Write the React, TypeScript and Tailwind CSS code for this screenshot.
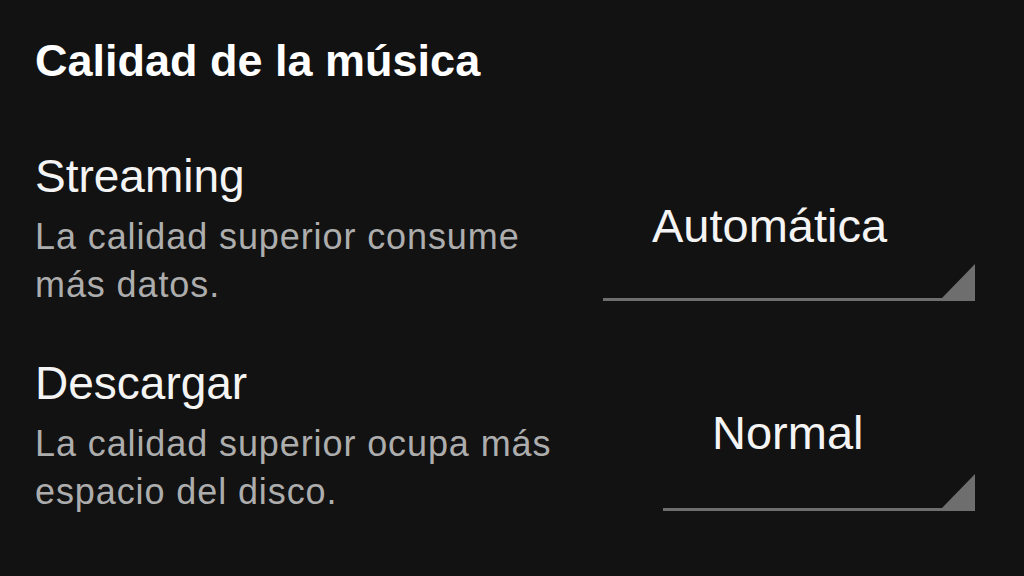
import type { ReactNode } from "react";

function Corner() {
  return (
    <svg width="33" height="34" viewBox="0 0 33 34" className="block">
      <polygon points="33,0 33,34 0,34" fill="#6e6e6e" />
    </svg>
  );
}

type SpinnerProps = {
  value: string;
  width: string;
  rowHeight: string;
};

function Spinner({ value, width, rowHeight }: SpinnerProps) {
  return (
    <div className={`flex flex-col ${width}`}>
      <div className="pl-[49px] text-[47px] leading-[56px] text-[#f4f4f4]">{value}</div>
      <div className={`flex items-end justify-end border-b-[3px] border-[#6e6e6e] ${rowHeight}`}>
        <Corner />
      </div>
    </div>
  );
}

function SettingRow({ title, children, spinner }: { title: string; children: ReactNode; spinner: ReactNode }) {
  return (
    <div className="flex items-start justify-between">
      <div className="flex flex-col">
        <div className="text-[46px] leading-[52px] text-[#f4f4f4]">{title}</div>
        <div className="mt-[11px] text-[36px] leading-[48px] tracking-[0.9px] text-[#adadad]">{children}</div>
      </div>
      <div className="mt-[48px]">{spinner}</div>
    </div>
  );
}

export default function App() {
  return (
    <div
      className="w-[1024px] h-[576px] overflow-hidden bg-[#121212] pl-[35px] pr-[49px] pt-[34px]"
      style={{ fontFamily: '"Liberation Sans", Arial, sans-serif' }}
    >
      <div className="text-[45px] leading-[54px] font-bold text-white">Calidad de la música</div>

      <div className="mt-[62px]">
        <SettingRow
          title="Streaming"
          spinner={<Spinner value="Automática" width="w-[372px]" rowHeight="h-[47px]" />}
        >
          La calidad superior consume
          <br />
          más datos.
        </SettingRow>
      </div>

      <div className="mt-[48px]">
        <SettingRow
          title="Descargar"
          spinner={<Spinner value="Normal" width="w-[312px]" rowHeight="h-[50px]" />}
        >
          La calidad superior ocupa más
          <br />
          espacio del disco.
        </SettingRow>
      </div>
    </div>
  );
}
